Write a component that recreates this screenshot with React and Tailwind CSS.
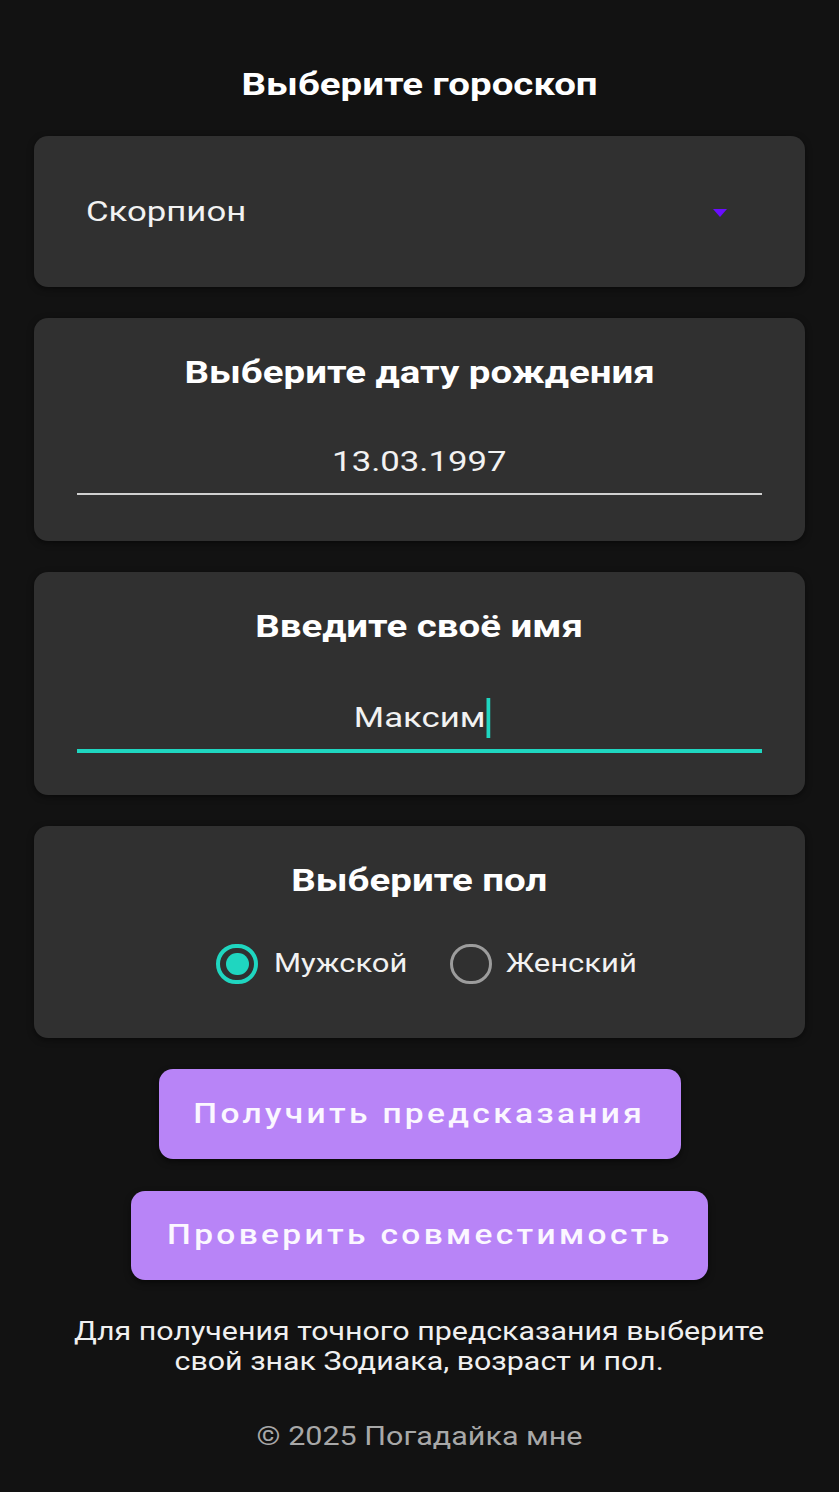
import React from "react";

function T({ className = "", children }) {
  return <span className={"inline-block " + (className.includes("scale-x-") ? "" : "scale-x-[1.24] ") + className}>{children}</span>;
}

export default function App() {
  return (
    <div
      className="min-h-[1492px] w-full bg-[#121212] text-white px-[34px] pt-[62px]"
      style={{ fontFamily: "Roboto, 'Noto Sans', sans-serif" }}
    >
      <h1 className="text-center text-[31px] leading-[46px] font-bold">
        <T>Выберите гороскоп</T>
      </h1>

      <div className="mt-[28px] flex flex-col gap-[31px]">
        {/* Select */}
        <div className="h-[151px] rounded-[14px] bg-[#303030] shadow-[0_2px_6px_rgba(0,0,0,0.5)] flex items-center justify-between pl-[52px] pr-[78px]">
          <T className="origin-left text-[28px] leading-[36px] text-[#f2f2f2]">Скорпион</T>
          <svg width="14" height="8" viewBox="0 0 14 8" className="mt-[2px]">
            <polygon points="0,0 14,0 7,8" fill="#6a0dff" />
          </svg>
        </div>

        {/* Date */}
        <div className="h-[223px] rounded-[14px] bg-[#303030] shadow-[0_2px_6px_rgba(0,0,0,0.5)] px-[43px] pt-[37px] flex flex-col">
          <div className="text-center text-[31px] leading-[36px] font-bold">
            <T>Выберите дату рождения</T>
          </div>
          <div className="mt-[53px] border-b-2 border-[#d0d0d0] pb-[13px] text-center text-[28px] leading-[36px] text-[#f2f2f2]">
            <T>13.03.1997</T>
          </div>
        </div>

        {/* Name */}
        <div className="h-[223px] rounded-[14px] bg-[#303030] shadow-[0_2px_6px_rgba(0,0,0,0.5)] px-[43px] pt-[37px] flex flex-col">
          <div className="text-center text-[31px] leading-[36px] font-bold">
            <T>Введите своё имя</T>
          </div>
          <div className="mt-[53px] border-b-4 border-[#1fd6c0] pb-[11px] flex justify-center items-center text-[28px] leading-[36px] text-[#f2f2f2]">
            <span className="inline-flex items-center scale-x-[1.24] translate-x-[2px]">
              <span>Максим</span>
              <span className="inline-block w-[2.5px] h-[40px] bg-[#1fd6c0] ml-[1px]" />
            </span>
          </div>
        </div>

        {/* Gender */}
        <div className="h-[212px] rounded-[14px] bg-[#303030] shadow-[0_2px_6px_rgba(0,0,0,0.5)] pt-[37px] flex flex-col items-center">
          <div className="text-center text-[31px] leading-[36px] font-bold">
            <T>Выберите пол</T>
          </div>
          <div className="mt-[45px] pl-[10px] flex items-center">
            <span className="w-[42px] h-[40px] rounded-full border-[4px] border-[#1fd6c0] flex items-center justify-center">
              <span className="w-[23px] h-[22px] rounded-full bg-[#1fd6c0]" />
            </span>
            <span className="ml-[16px] w-[127px] text-[25px] leading-[36px] text-[#f2f2f2]">
              <T className="origin-left">Мужской</T>
            </span>
            <span className="ml-[49px] w-[42px] h-[40px] rounded-full border-[3px] border-[#9c9c9c]" />
            <span className="ml-[14px] w-[127px] text-[25px] leading-[36px] text-[#f2f2f2]">
              <T className="origin-left">Женский</T>
            </span>
          </div>
        </div>

        {/* Buttons */}
        <div className="flex flex-col items-center gap-[32px]">
          <button className="w-[522px] h-[90px] rounded-[14px] bg-[#b884f7] text-[27px] font-medium tracking-[0.1em] text-[#fbf7ff] shadow-[0_3px_6px_rgba(0,0,0,0.5)]">
            <T>Получить предсказания</T>
          </button>
          <button className="w-[577px] h-[89px] rounded-[14px] bg-[#b884f7] text-[27px] font-medium tracking-[0.1em] text-[#fbf7ff] shadow-[0_3px_6px_rgba(0,0,0,0.5)]">
            <T>Проверить совместимость</T>
          </button>
        </div>
      </div>

      <p className="mt-[37px] text-center text-[25px] leading-[30px] text-[#f0f0f0]">
        <T className="scale-x-[1.215]">
          Для получения точного предсказания выберите
          <br />
          свой знак Зодиака, возраст и пол.
        </T>
      </p>
      <p className="mt-[45px] text-center text-[25px] leading-[30px] text-[#a8a8a8]">
        <T className="scale-x-[1.22]">© 2025 Погадайка мне</T>
      </p>
    </div>
  );
}
